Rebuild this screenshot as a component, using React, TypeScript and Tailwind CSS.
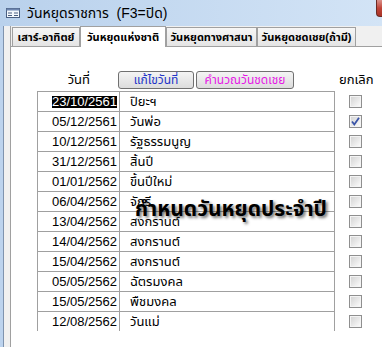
import React from 'react';

const rows = [
  { date: '23/10/2561', name: 'ปิยะฯ', checked: false, selected: true },
  { date: '05/12/2561', name: 'วันพ่อ', checked: true },
  { date: '10/12/2561', name: 'รัฐธรรมนูญ', checked: false },
  { date: '31/12/2561', name: 'สิ้นปี', checked: false },
  { date: '01/01/2562', name: 'ขึ้นปีใหม่', checked: false },
  { date: '06/04/2562', name: 'จักรี', checked: false },
  { date: '13/04/2562', name: 'สงกรานต์', checked: false },
  { date: '14/04/2562', name: 'สงกรานต์', checked: false },
  { date: '15/04/2562', name: 'สงกรานต์', checked: false },
  { date: '05/05/2562', name: 'ฉัตรมงคล', checked: false },
  { date: '15/05/2562', name: 'พืชมงคล', checked: false },
  { date: '12/08/2562', name: 'วันแม่', checked: false },
];

const tabs = [
  { label: 'เสาร์-อาทิตย์', w: 'w-[68px]', active: false },
  { label: 'วันหยุดแห่งชาติ', w: 'w-[86px]', active: true },
  { label: 'วันหยุดทางศาสนา', w: 'w-[91px]', active: false },
  { label: 'วันหยุดชดเชย(ถ้ามี)', w: 'w-[99px]', active: false },
];

function Checkbox({ checked }: { checked: boolean }) {
  return (
    <div className="w-[13px] h-[13px] border border-[#8f8f8f] bg-[#f4f4f4] p-px">
      <div className="relative w-full h-full bg-gradient-to-br from-[#d5d5d5] to-[#fafafa]">
        {checked && (
          <svg className="absolute -left-px -top-px" width="11" height="11" viewBox="0 0 11 11">
            <path d="M2 5.5 L4.3 8.5 L9 1.8" fill="none" stroke="#3b55a8" strokeWidth="1.8" />
          </svg>
        )}
      </div>
    </div>
  );
}

export default function App() {
  return (
    <div
      className="relative w-[382px] h-[347px] overflow-hidden bg-white text-black"
      style={{ fontFamily: 'Tahoma, "Liberation Sans", "Noto Sans Thai", sans-serif' }}
    >
      {/* title bar */}
      <div className="flex h-[26px] bg-gradient-to-r from-[#b9d1ec] to-[#d3e4f6]">
        <svg className="ml-[6px] mt-[8px]" width="14" height="10" viewBox="0 0 14 10">
          <rect x="0.5" y="0.5" width="13" height="9" fill="#f4f8fc" stroke="#4a5f80" />
          <rect x="0.5" y="0.5" width="13" height="2" fill="#6d86b0" />
          <line x1="2" y1="5" x2="6" y2="5" stroke="#4a5f80" />
          <line x1="2" y1="7.5" x2="6" y2="7.5" stroke="#4a5f80" />
          <line x1="8" y1="5" x2="12" y2="5" stroke="#4a5f80" />
          <line x1="8" y1="7.5" x2="12" y2="7.5" stroke="#4a5f80" />
        </svg>
        <div className="ml-[7px] mt-[5px] text-[14px] leading-[17px] text-black whitespace-pre">
          วันหยุดราชการ  (F3=ปิด)
        </div>
        <div className="ml-auto w-[6px] h-[17px] rounded-bl-[4px] bg-gradient-to-b from-[#d9908a] via-[#c0453a] to-[#a83226] border-l border-b border-[#6b2a24]" />
      </div>

      <div className="flex h-[321px]">
        {/* left frame */}
        <div className="flex h-full">
          <div className="w-[3px] bg-[#bcd3ee]" />
          <div className="w-px bg-[#7f93ae]" />
          <div className="w-[6px] bg-[#f0f0f0]" />
          <div className="w-px bg-[#a0a0a0]" />
        </div>

        <div className="relative flex-1 flex flex-col">
          {/* tab strip */}
          <div className="flex items-end h-[21px] bg-[#f0f0f0] border-b border-[#a0a0a0] pl-px">
            {tabs.map((t) =>
              t.active ? (
                <div
                  key={t.label}
                  className={`${t.w} h-[21px] -mb-px bg-white border border-b-0 border-[#a0a0a0] flex items-center justify-center text-[11px] font-bold`}
                >
                  {t.label}
                </div>
              ) : (
                <div
                  key={t.label}
                  className={`${t.w} h-[19px] bg-gradient-to-b from-[#f6f6f6] to-[#e4e4e4] border border-b-0 border-[#a0a0a0] flex items-center justify-center text-[11px] font-bold`}
                >
                  {t.label}
                </div>
              )
            )}
          </div>

          {/* header row */}
          <div className="flex items-center h-[18px] mt-[24px]">
            <div className="w-[107px] text-right text-[13px] pr-[28px]">วันที่</div>
            <button className="w-[76px] h-[18px] rounded-[3px] border border-[#707070] bg-gradient-to-b from-[#f4f4f4] to-[#dcdcdc] text-[12px] text-[#2235c8] leading-none">
              แก้ไขวันที่
            </button>
            <button className="ml-[2px] w-[98px] h-[18px] rounded-[3px] border border-[#707070] bg-gradient-to-b from-[#f4f4f4] to-[#dcdcdc] text-[12px] text-[#e619e6] leading-none">
              คำนวณวันชดเชย
            </button>
            <div className="ml-[45px] text-[13px]">ยกเลิก</div>
          </div>

          {/* table */}
          <div className="mt-[2px] ml-[26px] flex flex-col">
            {rows.map((r) => (
              <div key={r.date} className="flex h-[20px]">
                <div className="w-[82px] border-l border-t border-[#a0a0a0] flex items-center justify-end pr-[2px] text-[13px]">
                  <span className={r.selected ? 'bg-black text-white leading-[12px]' : ''}>{r.date}</span>
                </div>
                <div className="w-[216px] border-l border-r border-t border-[#a0a0a0] flex items-center pl-[10px] text-[13px]">
                  {r.name}
                </div>
                <div className="w-[42px] flex items-center pl-[14px]">
                  <Checkbox checked={r.checked} />
                </div>
              </div>
            ))}
          </div>

          {/* overlay caption */}
          <div className="absolute left-[124px] top-[172px] text-[21px] font-bold leading-none [text-shadow:2px_2px_3px_rgba(0,0,0,0.55)]">
            กำหนดวันหยุดประจำปี
          </div>
        </div>
      </div>
    </div>
  );
}
